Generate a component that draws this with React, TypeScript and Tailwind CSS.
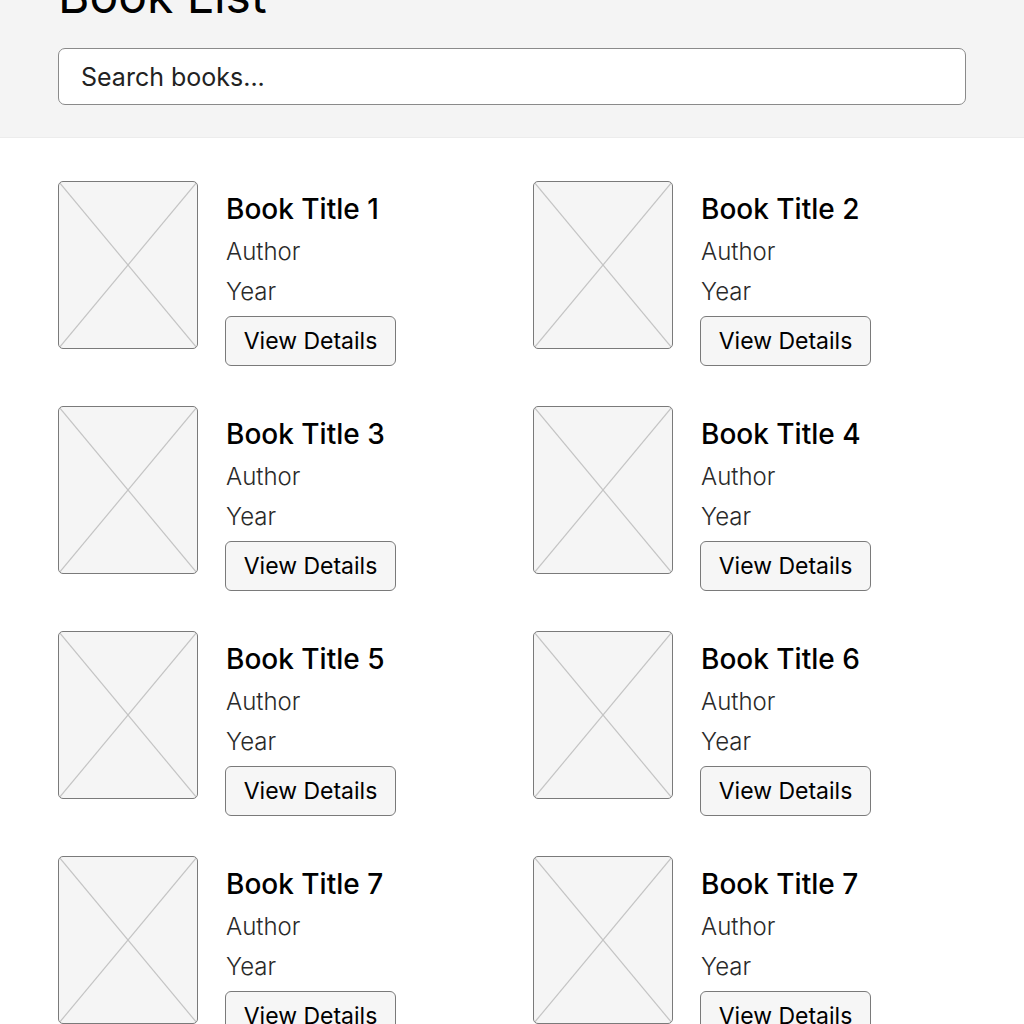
const books = [
  "Book Title 1",
  "Book Title 2",
  "Book Title 3",
  "Book Title 4",
  "Book Title 5",
  "Book Title 6",
  "Book Title 7",
  "Book Title 7",
];

function CoverPlaceholder() {
  return (
    <div className="w-[140px] h-[168px] shrink-0 rounded-[5px] border border-[#7a7a7a] bg-[#f5f5f5] overflow-hidden">
      <svg width="100%" height="100%" viewBox="0 0 138 166" preserveAspectRatio="none">
        <line x1="0" y1="0" x2="138" y2="166" stroke="#c4c4c4" strokeWidth="1.2" />
        <line x1="138" y1="0" x2="0" y2="166" stroke="#c4c4c4" strokeWidth="1.2" />
      </svg>
    </div>
  );
}

function BookCard({ title }: { title: string }) {
  return (
    <div className="flex gap-[28px]">
      <CoverPlaceholder />
      <div className="flex flex-col pt-[10px]">
        <h2 className="text-[28px] leading-[36px] font-medium text-black">{title}</h2>
        <p className="text-[24px] leading-[40px] font-light text-[#2a2a2a] mt-[5px]">Author</p>
        <p className="text-[24px] leading-[40px] font-light text-[#2a2a2a]">Year</p>
        <button className="mt-[4px] -ml-px w-[171px] h-[50px] rounded-[6px] border border-[#7a7a7a] bg-[#f6f6f6] text-[23px] text-black">
          View Details
        </button>
      </div>
    </div>
  );
}

export default function App() {
  return (
    <div className="min-h-screen bg-white font-['Inter',sans-serif] text-black">
      {/* Header */}
      <div className="bg-[#f4f4f4] h-[138px] px-[58px] overflow-hidden border-b border-[#ececec]">
        <h1 className="text-[48px] leading-[48px] font-normal mt-[-28px] mb-[28px]">Book List</h1>
        <input
          type="text"
          placeholder="Search books..."
          className="w-[908px] h-[57px] rounded-[7px] border border-[#8a8a8a] bg-white px-[22px] text-[25px] placeholder:text-[#222] outline-none"
        />
      </div>

      {/* Grid */}
      <div className="grid grid-cols-2 gap-x-[42px] gap-y-[40px] px-[58px] pt-[43px]">
        {books.map((b, i) => (
          <BookCard key={i} title={b} />
        ))}
      </div>
    </div>
  );
}
